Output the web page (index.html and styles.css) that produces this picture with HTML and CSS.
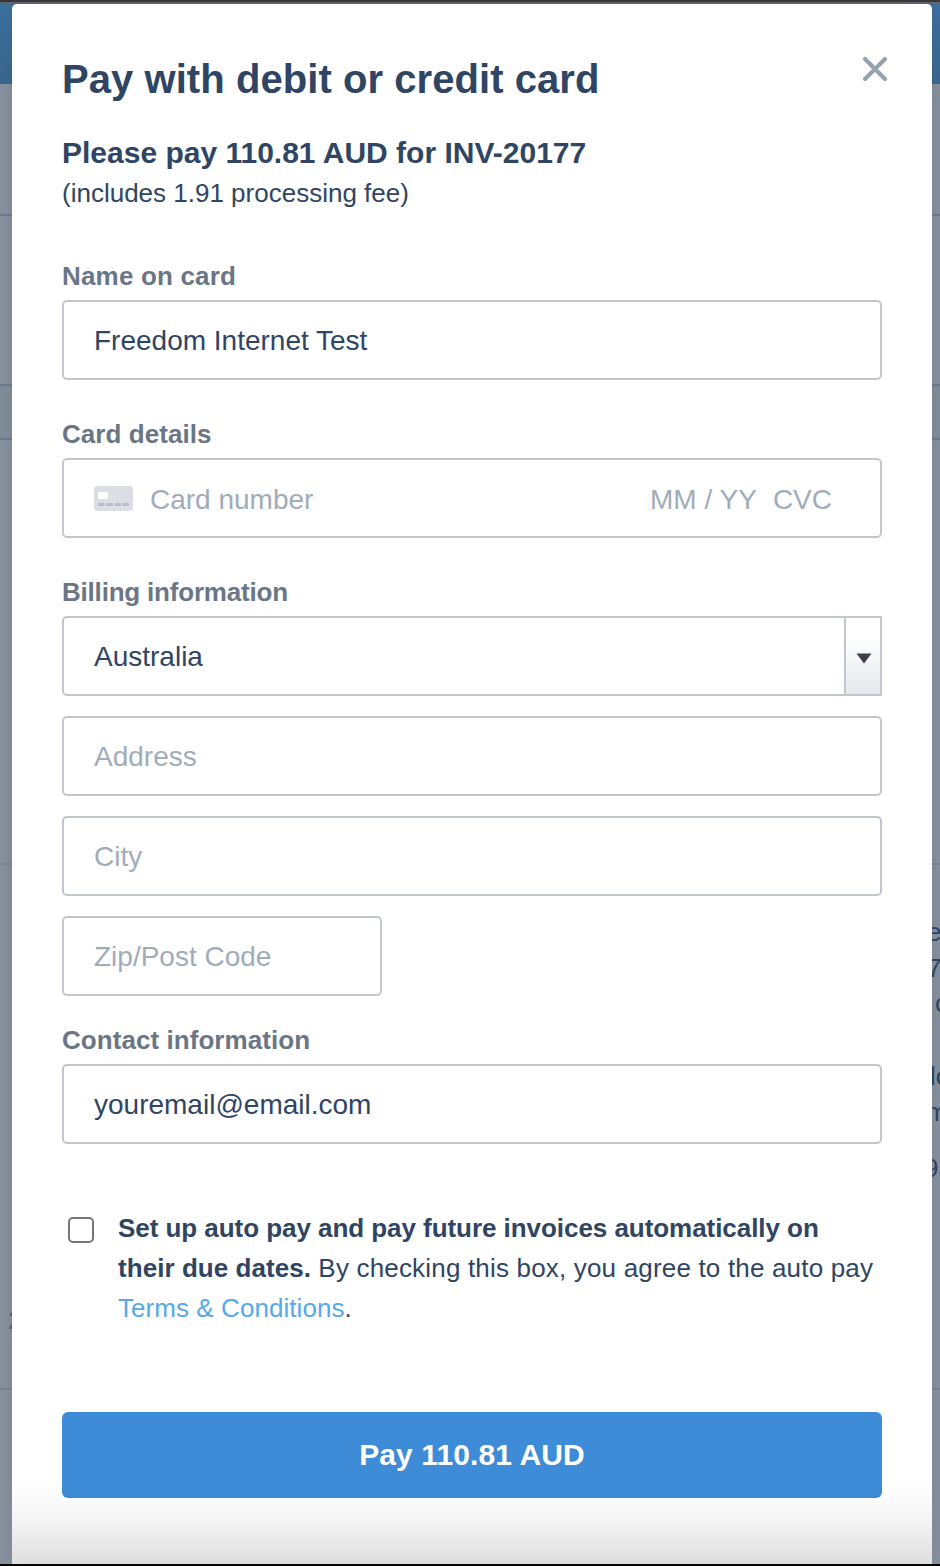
FILE: index.html
```
<!DOCTYPE html>
<html lang="en">
<head>
    <meta charset="UTF-8">
    <meta name="viewport" content="width=device-width, initial-scale=1.0">
    <title>Pay with debit or credit card</title>
    <link rel="stylesheet" href="styles.css">
</head>
<body>
    <!-- Invoice page behind the popup -->
    <div class="page">
        <header class="page-header"></header>
        <section class="page-title"></section>
        <section class="page-toolbar"></section>
        <section class="page-tabs"></section>
        <section class="page-summary"></section>
        <section class="page-invoice">
            <div class="invoice-number">2</div>
            <div class="invoice-company">
                <p>e</p>
                <p>7</p>
                <p class="indent">c</p>
                <p class="gap">lo</p>
                <p class="outdent">m</p>
                <p class="phone">93</p>
            </div>
        </section>
        <section class="page-items"></section>
    </div>

    <!-- Payment popup -->
    <main class="modal">
        <button type="button" class="close-btn" aria-label="Close">
            <svg width="26" height="26" viewBox="0 0 26 26">
                <path d="M3 3L23 23M23 3L3 23" fill="none" stroke="#96a2b0" stroke-width="4.2" stroke-linecap="round"/>
            </svg>
        </button>

        <h1>Pay with debit or credit card</h1>
        <h2>Please pay 110.81 AUD for INV-20177</h2>
        <p class="fee">(includes 1.91 processing fee)</p>

        <form class="payment-form">
            <label for="card-name" class="name-label">Name on card</label>
            <input type="text" id="card-name" class="field" value="Freedom Internet Test">

            <label for="card-number">Card details</label>
            <div class="field card-field">
                <svg class="card-icon" width="39" height="25" viewBox="0 0 39 25">
                    <rect width="39" height="25" rx="3" fill="#dddee5"/>
                    <rect x="4" y="6" width="10" height="7" rx="1.5" fill="#fff"/>
                    <path d="M5.3 18.5h4.2M13.5 18.5h4.2M21.7 18.5h4.2M29.6 18.5h4.2" stroke="#b9bccb" stroke-width="2.8" stroke-linecap="round"/>
                </svg>
                <input type="text" id="card-number" placeholder="Card number">
                <span class="expiry">MM / YY</span>
                <span class="cvc">CVC</span>
            </div>

            <label class="billing-label">Billing information</label>
            <div class="billing">
                <div class="field country">
                    <span>Australia</span>
                    <div class="country-arrow">
                        <svg width="16" height="11" viewBox="0 0 16 11">
                            <path d="M0.5 0.5H15.5L8 10.5Z" fill="#3a3f4b"/>
                        </svg>
                    </div>
                </div>
                <input type="text" class="field" placeholder="Address">
                <input type="text" class="field" placeholder="City">
                <input type="text" class="field zip" placeholder="Zip/Post Code">
            </div>

            <label for="email" class="contact-label">Contact information</label>
            <input type="text" id="email" class="field" value="youremail@email.com">

            <div class="autopay">
                <input type="checkbox" id="autopay">
                <p>
                    <b>Set up auto pay and pay future invoices automatically on</b><br>
                    <b class="due">their due dates.</b> <span>By checking this box, you agree to the auto pay</span><br>
                    <a>Terms &amp; Conditions</a>.
                </p>
            </div>

            <button type="button" class="pay-btn">Pay 110.81 AUD</button>
        </form>
    </main>
</body>
</html>
```
FILE: styles.css
```
* {
    margin: 0;
    padding: 0;
    box-sizing: border-box;
}

body {
    position: relative;
    width: 940px;
    height: 1566px;
    overflow: hidden;
    font-family: "Liberation Sans", Arial, sans-serif;
    color: #2f4563;
    background: #000;
}

/* Page behind */
.page {
    display: flex;
    flex-direction: column;
    height: 1564px;
    background: #89929e;
    border-top: 2px solid #38373c;
}

.page-header {
    height: 82px;
    border-top: 2px solid #666;
    background: linear-gradient(#3d709e, #3a688f);
}

.page-title {
    height: 132px;
    border-bottom: 2px solid #6f7c90;
}

.page-toolbar {
    height: 170px;
    border-bottom: 2px solid #6f7c90;
}

.page-tabs {
    height: 54px;
    background: #828e99;
    border-bottom: 2px solid #6f7c90;
}

.page-summary {
    height: 425px;
    border-bottom: 2px solid #7a8794;
}

.page-invoice {
    display: flex;
    justify-content: space-between;
    height: 525px;
    border-bottom: 2px solid #7a8794;
    font-size: 26px;
}

.invoice-number {
    margin: 440px 0 0 8px;
    color: #56657b;
}

.invoice-company {
    width: 13px;
    padding-top: 49px;
    line-height: 36px;
    white-space: nowrap;
}

.invoice-company .indent {
    padding-left: 8px;
    margin-top: -1px;
}

.invoice-company .gap {
    margin: 37px 0 0 3px;
}

.invoice-company .outdent {
    margin-left: -1px;
}

.invoice-company .phone {
    margin: 20px 0 0 -3px;
}

.page-items {
    flex: 1;
}

/* Popup */
.modal {
    position: absolute;
    top: 4px;
    left: 12px;
    width: 920px;
    height: 1560px;
    padding: 50px;
    background: #fff;
    border-radius: 5px 5px 0 0;
    box-shadow: 0 0 24px rgba(45, 65, 80, 0.16);
}

.modal::after {
    content: "";
    position: absolute;
    left: 0;
    right: 0;
    bottom: 0;
    height: 88px;
    background: linear-gradient(rgba(0, 0, 0, 0), rgba(0, 0, 0, 0.015) 25%, rgba(0, 0, 0, 0.05) 55%, rgba(0, 0, 0, 0.13));
    pointer-events: none;
}

.close-btn {
    position: absolute;
    top: 52px;
    right: 44px;
    width: 26px;
    height: 26px;
    background: none;
    border: none;
    cursor: pointer;
}

.close-btn svg {
    display: block;
}

h1 {
    font-size: 40px;
    line-height: 50px;
    letter-spacing: 0.06px;
}

h2 {
    margin-top: 31px;
    font-size: 30px;
    line-height: 36px;
}

.fee {
    margin-top: 4px;
    font-size: 26px;
    line-height: 36px;
}

/* Form */
.payment-form {
    margin-top: 41px;
}

label {
    display: block;
    height: 48px;
    font-size: 26px;
    font-weight: bold;
    line-height: 48px;
    letter-spacing: 0.06px;
    color: #6a7686;
}

.name-label {
    letter-spacing: 0.18px;
}

.billing-label {
    letter-spacing: -0.2px;
}

.field {
    display: block;
    width: 820px;
    height: 80px;
    margin-bottom: 30px;
    padding: 1px 30px 0;
    border: 2px solid #c1c6d1;
    border-radius: 5px;
    background: #fff;
}

input, .field {
    font-family: inherit;
    font-size: 28px;
    color: #2f4563;
    outline: none;
}

input::placeholder {
    color: #a0acba;
    opacity: 1;
}

.card-field {
    display: flex;
    align-items: center;
    padding-right: 48px;
    color: #a0acba;
}

.card-field input,
.card-field span {
    padding-top: 3px;
}

.card-icon {
    flex: none;
    margin-top: -1px;
}

.card-field input {
    flex: 1;
    min-width: 0;
    margin-left: 17px;
    border: none;
}

.cvc {
    margin-left: 16px;
}

.billing {
    display: flex;
    flex-direction: column;
    gap: 20px;
    margin-bottom: 20px;
}

.billing .field {
    margin-bottom: 0;
}

.country {
    display: flex;
    align-items: center;
    justify-content: space-between;
    padding-top: 0;
    padding-right: 0;
    border-radius: 5px 0 0 5px;
}

.country span {
    padding-top: 1px;
}

.country-arrow {
    display: flex;
    align-items: center;
    justify-content: center;
    width: 36px;
    height: 76px;
    padding: 5px 0 0 2px;
    border-left: 2px solid #c1c6d1;
    background: linear-gradient(#fff 25%, #e6e8ec);
}

.billing .zip {
    width: 320px;
}

/* Auto pay */
.autopay {
    display: flex;
    margin-top: 64px;
    padding-left: 6px;
}

.autopay input {
    appearance: none;
    flex: none;
    width: 26px;
    height: 26px;
    margin: 9px 24px 0 0;
    border: 2px solid #767676;
    border-radius: 5px;
}

.autopay p {
    font-size: 26px;
    line-height: 40px;
    white-space: nowrap;
}

.autopay b {
    letter-spacing: -0.05px;
}

.autopay .due {
    letter-spacing: 0.06px;
}

.autopay span {
    letter-spacing: 0.18px;
}

.autopay a {
    letter-spacing: 0.06px;
    color: #56a8e7;
}

.pay-btn {
    width: 820px;
    height: 86px;
    margin-top: 84px;
    font-family: inherit;
    font-size: 30px;
    font-weight: bold;
    letter-spacing: 0.12px;
    color: #fff;
    background: #3e8bd8;
    border: none;
    border-radius: 6px;
    cursor: pointer;
}
```
